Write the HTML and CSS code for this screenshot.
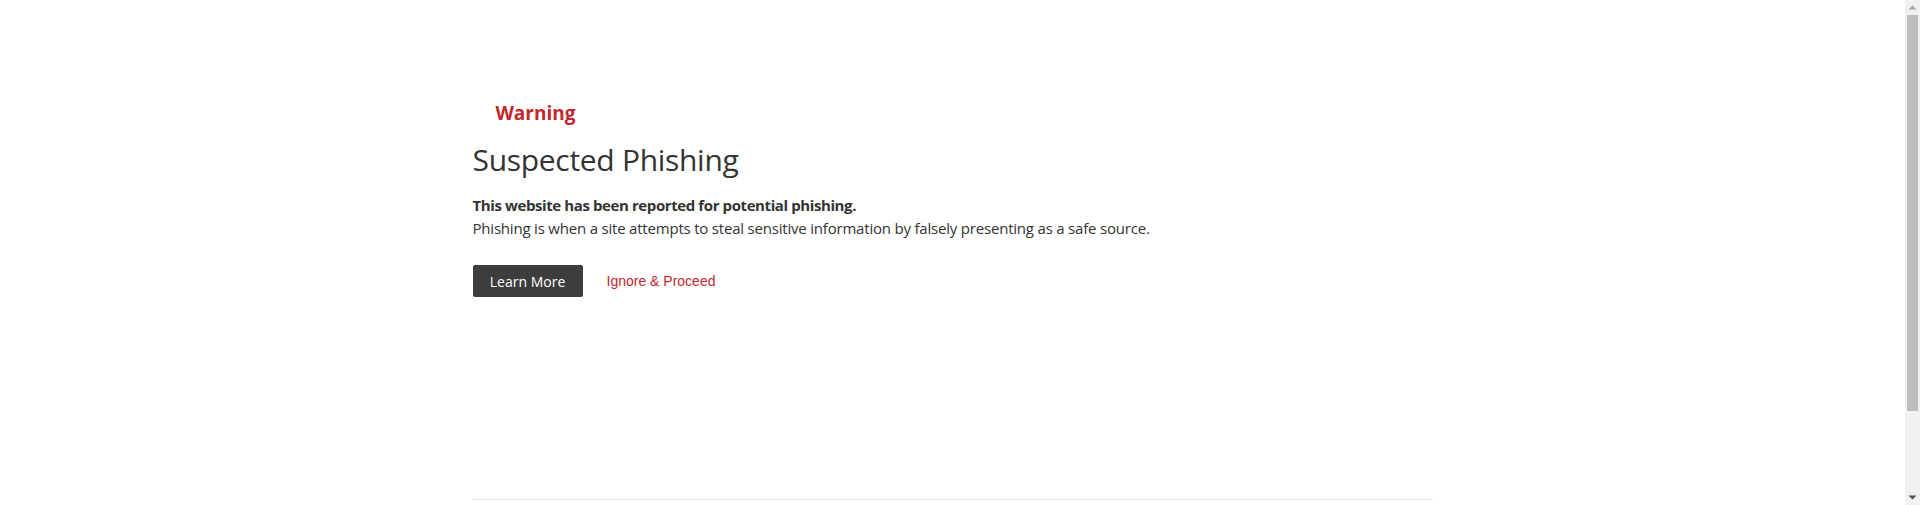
FILE: index.html
```html
<!DOCTYPE html>
<html lang="en">
<head>
<meta charset="utf-8">
<title>Suspected Phishing</title>
<link rel="stylesheet" href="styles.css">
</head>
<body>
<div class="viewport">
  <div class="page">
    <main class="content">
      <div class="warning">Warning</div>
      <h1 class="title">Suspected Phishing</h1>
      <p class="lead"><strong>This website has been reported for potential phishing.</strong><br>Phishing is when a site attempts to steal sensitive information by falsely presenting as a safe source.</p>
      <div class="actions">
        <a class="btn" href="#">Learn More</a>
        <a class="ignore" href="#">Ignore &amp; Proceed</a>
      </div>
    </main>
    <footer class="footer">&nbsp;</footer>
  </div>
</div>
<div class="rail">
  <svg class="rail-svg" width="15" height="505" viewBox="0 0 15 505" xmlns="http://www.w3.org/2000/svg">
    <rect x="0" y="0" width="15" height="505" fill="#f1f1f1"/>
    <polygon points="3.5,9.5 11.5,9.5 7.5,5.5" fill="#a3a3a3"/>
    <rect x="2" y="15" width="11" height="396" fill="#bdbdbd"/>
    <polygon points="3.5,495.5 11.5,495.5 7.5,499.5" fill="#505050"/>
  </svg>
</div>
</body>
</html>
```

FILE: styles.css
```css
html, body {
  margin: 0;
  padding: 0;
  background: #fff;
}
body {
  font-family: "Open Sans", "Noto Sans", sans-serif;
  color: #333;
  height: 505px;
  overflow: hidden;
  display: flex;
}
.viewport {
  flex: 1;
  min-width: 0;
}
.page {
  width: 960px;
  margin: 0 auto;
}
.content {
  padding-top: 100px;
  height: 499px;
  box-sizing: border-box;
}
.warning {
  padding-left: 23px;
  font-size: 19px;
  font-weight: 700;
  color: #c1272d;
  line-height: 26px;
}
.title {
  margin: 16px 0 0;
  font-size: 30px;
  font-weight: 400;
  line-height: 36px;
  color: #333;
  letter-spacing: -0.3px;
}
.lead {
  margin: 16px 0 0;
  font-size: 15px;
  line-height: 23px;
  color: #333;
  letter-spacing: -0.2px;
}
.lead strong {
  letter-spacing: -0.4px;
}
.actions {
  margin-top: 25px;
  display: flex;
  align-items: center;
  gap: 24px;
}
.btn {
  display: inline-flex;
  align-items: center;
  justify-content: center;
  width: 110px;
  height: 32px;
  background: #3d3d3d;
  border-radius: 2px;
  color: #fff;
  text-decoration: none;
  font-size: 14px;
}
.ignore {
  font-family: "Liberation Sans", Arial, sans-serif;
  font-size: 14px;
  color: #c1272d;
  text-decoration: none;
}
.footer {
  border-top: 1px solid #e4e4e4;
  height: 6px;
  box-sizing: border-box;
  font-size: 0;
  line-height: 0;
}
.rail {
  flex: none;
  width: 15px;
  height: 505px;
  background: #f1f1f1;
}
.rail-svg {
  display: block;
}
```
